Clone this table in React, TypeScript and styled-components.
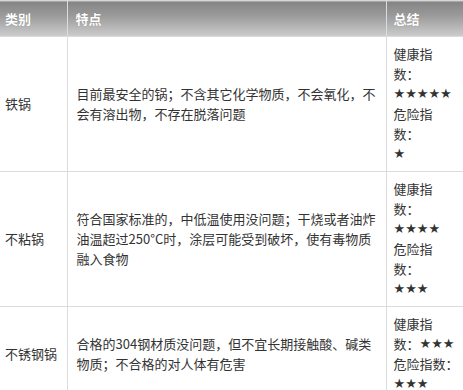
import React from "react";
import styled, { createGlobalStyle } from "styled-components";

const Global = createGlobalStyle`
  html, body { margin: 0; padding: 0; background: #fff; overflow: hidden; }
  body { font-family: "Noto Sans CJK SC", "Noto Sans", sans-serif; }
`;

const Table = styled.table`
  border-collapse: collapse;
  width: 480px;
  table-layout: fixed;
  font-size: 13px;
  line-height: 20px;
  color: #333;
`;

const HeadCell = styled.th<{ $pl: number }>`
  height: 35px;
  padding: 0 0 0 ${(p) => p.$pl}px;
  text-align: left;
  font-weight: bold;
  font-size: 13px;
  color: #fff;
  text-shadow: 0 0 1px rgba(0, 0, 0, 0.25);
  background: linear-gradient(to bottom, #848484 0%, #9a9a9a 40%, #cdcdcd 100%);
  border-top: 1px solid #d6d6d6;
  border-left: 1px solid #dcdcdc;
  border-right: 1px solid #dcdcdc;
  &:first-child { border-left: none; }
`;

const Cell = styled.td<{ $pl: number }>`
  padding: 7px 4px 7px ${(p) => p.$pl}px;
  vertical-align: middle;
  border: 1px solid #dcdcdc;
  &:first-child { border-left: none; }
`;

const Line = styled.span`
  display: block;
  height: 20px;
  white-space: nowrap;
`;

const Stars = styled.span`
  display: inline-block;
  height: 20px;
  line-height: 20px;
  vertical-align: top;
  font-family: "DejaVu Sans", sans-serif;
  font-size: 13px;
`;

type Row = {
  kind: string;
  desc: string;
  summary: React.ReactNode[];
};

const rows: Row[] = [
  {
    kind: "铁锅",
    desc: "目前最安全的锅；不含其它化学物质，不会氧化，不会有溶出物，不存在脱落问题",
    summary: [
      "健康指",
      "数：",
      <Stars>★★★★★</Stars>,
      "危险指",
      "数：",
      <Stars>★</Stars>,
    ],
  },
  {
    kind: "不粘锅",
    desc: "符合国家标准的，中低温使用没问题；干烧或者油炸油温超过250°C时，涂层可能受到破坏，使有毒物质融入食物",
    summary: [
      "健康指",
      "数：",
      <Stars>★★★★</Stars>,
      "危险指",
      "数：",
      <Stars>★★★</Stars>,
    ],
  },
  {
    kind: "不锈钢锅",
    desc: "合格的304钢材质没问题，但不宜长期接触酸、碱类物质；不合格的对人体有危害",
    summary: [
      "健康指",
      <>
        数：<Stars>★★★</Stars>
      </>,
      "危险指数：",
      <Stars>★★★</Stars>,
    ],
  },
];

export default function App() {
  return (
    <>
      <Global />
      <Table>
        <colgroup>
          <col style={{ width: 67 }} />
          <col style={{ width: 319 }} />
          <col />
        </colgroup>
        <thead>
          <tr>
            <HeadCell $pl={5}>类别</HeadCell>
            <HeadCell $pl={8}>特点</HeadCell>
            <HeadCell $pl={7}>总结</HeadCell>
          </tr>
        </thead>
        <tbody>
          {rows.map((r) => (
            <tr key={r.kind}>
              <Cell $pl={5}>{r.kind}</Cell>
              <Cell $pl={9}>{r.desc}</Cell>
              <Cell $pl={7}>
                {r.summary.map((s, i) => (
                  <Line key={i}>{s}</Line>
                ))}
              </Cell>
            </tr>
          ))}
        </tbody>
      </Table>
    </>
  );
}
